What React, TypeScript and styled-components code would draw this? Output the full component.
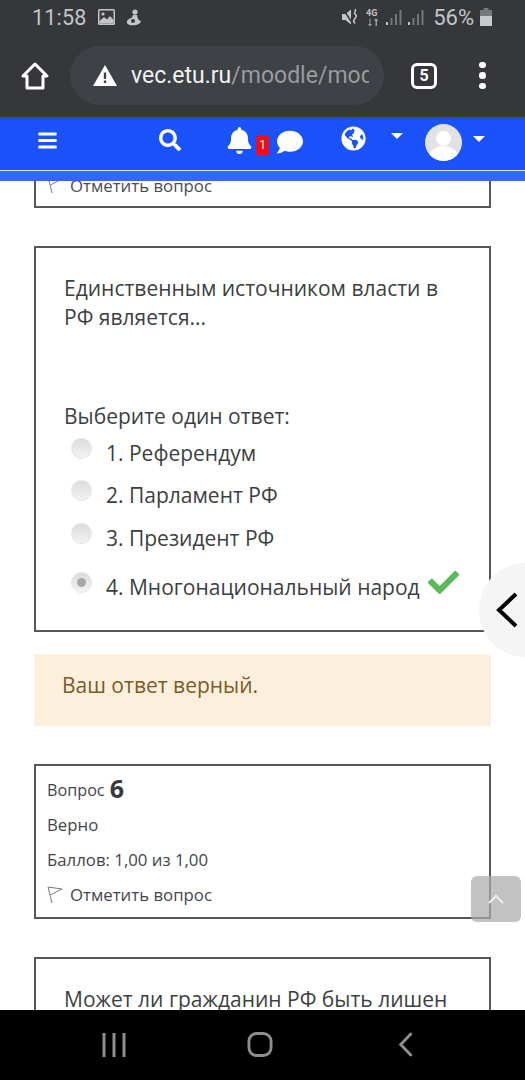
import React from "react";
import styled, { createGlobalStyle } from "styled-components";
import { FaBars, FaSearch, FaBell, FaComment, FaGlobeAmericas, FaCheck } from "react-icons/fa";

const Global = createGlobalStyle`
  html, body { margin: 0; padding: 0; background: #fff; }
  * { box-sizing: border-box; }
`;

const Phone = styled.div`
  position: relative;
  width: 525px;
  height: 1080px;
  display: flex;
  flex-direction: column;
  overflow: hidden;
  font-family: "Open Sans", "Liberation Sans", sans-serif;
  color: #373a3c;
`;

const StatusBar = styled.div`
  height: 36px;
  flex: none;
  background: #36373b;
  color: #c4c5c7;
  font-family: Roboto, "Liberation Sans", sans-serif;
  display: flex;
  align-items: center;
  justify-content: space-between;
  padding: 0 33px 2px 32px;
`;

const StatusGroup = styled.div`
  display: flex;
  align-items: center;
  gap: 11px;
`;

const StatusRight = styled(StatusGroup)`
  gap: 6px;
`;

const Clock = styled.span`
  font-size: 21.5px;
  letter-spacing: 0.2px;
`;

const Battery = styled.span`
  font-size: 22px;
  margin-left: 3px;
`;

const Toolbar = styled.div`
  height: 81px;
  flex: none;
  background: #36373b;
  display: flex;
  align-items: center;
  padding: 0 0 2px 20px;
`;

const UrlPill = styled.div`
  width: 314px;
  height: 59px;
  margin-left: 20px;
  border-radius: 30px;
  background: #3e4145;
  display: flex;
  align-items: center;
  padding-left: 23px;
  font-family: Roboto, "Liberation Sans", sans-serif;
  font-size: 23px;
`;

const UrlClip = styled.div`
  width: 238px;
  margin-left: 14px;
  overflow: hidden;
  white-space: nowrap;
  color: #f1f2f2;
`;

const UrlPath = styled.span`
  color: #999c9f;
`;

const TabCount = styled.div`
  width: 26px;
  height: 26px;
  margin-left: 27px;
  border: 3px solid #fff;
  border-radius: 6px;
  color: #fff;
  font: 700 16px Roboto, sans-serif;
  display: flex;
  align-items: center;
  justify-content: center;
`;

const Dots = styled.div`
  margin-left: 42px;
  display: flex;
  flex-direction: column;
  gap: 4px;
`;

const Dot = styled.span`
  width: 6.5px;
  height: 6.5px;
  border-radius: 50%;
  background: #fff;
`;

const NavBar = styled.div`
  height: 53px;
  flex: none;
  background: #1a53fb;
  color: #fff;
  display: flex;
  align-items: center;
  border-top: 3px solid #1f4ccd;
  position: relative;
`;

const NavStrip = styled.div`
  height: 11px;
  flex: none;
  background: #3468f2;
  border-top: 1px solid #dfe8ff;
`;

const NavSlot = styled.div<{ $w: number; $up?: number }>`
  width: ${(p) => p.$w}px;
  flex: none;
  display: flex;
  align-items: center;
  justify-content: flex-start;
  transform: translateY(${(p) => -(p.$up ?? 0)}px);
`;

const BadgeBox = styled.span`
  width: 13px;
  height: 20px;
  margin: 10px 0 0 3px;
  border-radius: 2px;
  background: #ee0d1a;
  color: #fff;
  font: 12px Roboto, sans-serif;
  display: flex;
  align-items: center;
  justify-content: center;
`;

const Caret = styled.span`
  width: 0;
  height: 0;
  border-left: 6px solid transparent;
  border-right: 6px solid transparent;
  border-top: 6px solid #fff;
`;

const Avatar = styled.span`
  width: 37px;
  height: 37px;
  border-radius: 50%;
  overflow: hidden;
  display: block;
`;

const Content = styled.div`
  flex: 1;
  min-height: 0;
  overflow: hidden;
  background: #fff;
  padding: 0 34px;
`;

const Card = styled.div`
  border: 2px solid #55585b;
  background: #fff;
`;

const ClippedCard = styled(Card)`
  height: 27px;
  border-top: 0;
  padding-left: 11px;
  overflow: hidden;
  margin-bottom: 38px;
`;

const ClippedInner = styled.div`
  margin-top: -8px;
`;

const FlagRow = styled.div`
  display: flex;
  align-items: center;
  gap: 7px;
  height: 24px;
  font-size: 16.8px;
  color: #4a4d50;
`;

const QuestionCard = styled(Card)`
  height: 386px;
  padding: 26px 20px 0 28px;
  margin-bottom: 22px;
`;

const QuestionText = styled.div`
  font-size: 21px;
  line-height: 28.5px;
  color: #3c3f41;
`;

const Prompt = styled(QuestionText)`
  margin-top: 71px;
`;

const Options = styled.div`
  margin-top: 5px;
  display: flex;
  flex-direction: column;
`;

const Option = styled.div<{ $h: number }>`
  height: ${(p) => p.$h}px;
  display: flex;
  align-items: flex-start;
  padding-left: 7px;
  font-size: 21px;
  line-height: 28px;
  color: #3c3f41;
`;

const Radio = styled.span<{ $on?: boolean }>`
  position: relative;
  width: 21px;
  height: 21px;
  margin: 2px 14px 0 0;
  border-radius: 50%;
  flex: none;
  background: linear-gradient(#dcdcdc, #f3f3f3);
  border: 1px solid #e4e4e4;
  &::after {
    content: "";
    position: absolute;
    left: 5px;
    top: 5px;
    width: 9px;
    height: 9px;
    border-radius: 50%;
    background: ${(p) => (p.$on ? "#a8a8a8" : "transparent")};
  }
`;

const OptionText = styled.span`
  margin-top: 3px;
  white-space: nowrap;
`;

const Tick = styled.span`
  display: flex;
  margin: -3px 0 0 8px;
  color: #5cb85c;
  font-size: 31px;
`;

const Alert = styled.div`
  height: 72px;
  margin: 0 0 38px;
  padding-left: 28px;
  background: #fcefdc;
  color: #7d5a29;
  font-size: 21px;
  display: flex;
  align-items: center;
  padding-bottom: 10px;
`;

const InfoCard = styled(Card)`
  height: 155px;
  padding: 6px 11px 0;
  margin-bottom: 38px;
  font-size: 16.8px;
  color: #43464a;
`;

const InfoLine = styled.div`
  height: 35px;
  display: flex;
  align-items: center;
`;

const QLabel = styled.span`
  font-size: 16.2px;
`;

const QNum = styled.b`
  font-size: 25px;
  line-height: 30px;
  margin: -4px 0 0 5px;
  color: #373a3c;
`;

const FlagLabel = styled.span`
  margin-left: 7px;
`;

const NextCard = styled(Card)`
  border-bottom: 0;
  height: 100px;
  padding: 26px 20px 0 28px;
`;

const BottomBar = styled.div`
  height: 70px;
  flex: none;
  background: #000;
  display: flex;
  align-items: center;
  padding-bottom: 1px;
`;

const BottomSlot = styled.div<{ $left: number }>`
  margin-left: ${(p) => p.$left}px;
  display: flex;
`;

const ToTop = styled.div`
  position: absolute;
  left: 471px;
  top: 876px;
  width: 50px;
  height: 46px;
  border-radius: 6px;
  background: rgba(170, 170, 170, 0.72);
  display: flex;
  align-items: center;
  justify-content: center;
`;

const EdgeHandle = styled.div`
  position: absolute;
  left: 479px;
  top: 563px;
  width: 92px;
  height: 94px;
  border-radius: 50%;
  background: #f5f5f5;
  display: flex;
  align-items: center;
  padding-left: 16px;
`;

const FlagIcon = ({ size = 16 }: { size?: number }) => (
  <svg width={size} height={size + 2} viewBox="0 0 16 18" fill="none" stroke="#77797b" strokeWidth="1">
    <path d="M1 1 L5 17 M1 1 L15 3 L3.4 9" />
  </svg>
);

export default function App() {
  return (
    <Phone>
      <Global />
      <StatusBar>
        <StatusGroup>
          <Clock>11:58</Clock>
          <svg width="17" height="16" viewBox="0 0 17 16">
            <rect x="0" y="0" width="17" height="16" rx="1.5" fill="#c4c5c7" />
            <rect x="1.5" y="1.5" width="14" height="13" fill="#3a3b3f" />
            <circle cx="5" cy="5" r="1.6" fill="#c4c5c7" />
            <path d="M1.5 14.5 L1.5 12 L6 8 L9 10.5 L12 7 L15.5 11 L15.5 14.5 Z" fill="#c4c5c7" />
          </svg>
          <svg width="16" height="17" viewBox="0 0 16 17" fill="#c4c5c7">
            <circle cx="9" cy="3" r="2.6" />
            <path d="M7 6 h4 l1 4 l3 2.5 l-1.5 2 c-3 2-8 2.5-11 1 C0.5 14.5 0 12 3 10 l3 -1.5 Z M5 12 a2 2 0 1 0 4 0 a2 2 0 1 0 -4 0" fillRule="evenodd" />
          </svg>
        </StatusGroup>
        <StatusRight>
          <svg width="18" height="18" viewBox="0 0 18 18" fill="#c4c5c7">
            <path d="M0 6 h3.5 L9 1.5 v15 L3.5 12 H0 Z" />
            <path d="M1 1 L11 16" stroke="#36373b" strokeWidth="1.5" />
            <path d="M13 1 c2 2-1.500 3 0 5 s2 2 0 4.500 s-1.500 3 0 5" fill="none" stroke="#c4c5c7" strokeWidth="1.6" />
          </svg>
          <svg width="14" height="19" viewBox="0 0 14 19" fill="#9c9da0">
            <text x="0" y="8" fontSize="9" fontWeight="700" fontFamily="Roboto, sans-serif" fill="#c4c5c7">4G</text>
            <path d="M3.500 10.500 h1 V16 H6 L4 18.500 L2 16 H3.500 Z M10 10 L12.500 13 H11 V18 H9.500 V13 H8 Z" />
          </svg>
          <svg width="16" height="17" viewBox="0 0 16 17" fill="#75777a">
            <rect x="0" y="13" width="2" height="3" fill="#c4c5c7" />
            <rect x="4.500" y="9" width="2" height="7" />
            <rect x="9" y="5" width="2" height="11" />
            <rect x="13.500" y="1" width="2" height="15" />
          </svg>
          <svg width="16" height="17" viewBox="0 0 16 17" fill="#75777a">
            <rect x="0" y="13" width="2" height="3" fill="#c4c5c7" />
            <rect x="4.500" y="9" width="2" height="7" />
            <rect x="9" y="5" width="2" height="11" />
            <rect x="13.500" y="1" width="2" height="15" />
          </svg>
          <Battery>56%</Battery>
          <svg width="12" height="18" viewBox="0 0 12 18">
            <rect x="3.500" y="0" width="5" height="2" fill="#76787b" />
            <rect x="0" y="2" width="12" height="6" fill="#76787b" />
            <rect x="0" y="8" width="12" height="10" fill="#c9cacb" />
          </svg>
        </StatusRight>
      </StatusBar>
      <Toolbar>
        <svg width="30" height="30" viewBox="0 0 30 30" fill="none" stroke="#fff" strokeWidth="3" strokeLinejoin="round">
          <path d="M15 3 L27 15 H23 V27 H7 V15 H3 Z" />
        </svg>
        <UrlPill>
          <svg width="24" height="21" viewBox="0 0 24 21">
            <path d="M12 0 L24 21 H0 Z" fill="#fff" />
            <rect x="10.800" y="7.500" width="2.400" height="6.500" fill="#3e4145" />
            <rect x="10.800" y="15.500" width="2.400" height="2.500" fill="#3e4145" />
          </svg>
          <UrlClip>
            vec.etu.ru<UrlPath>/moodle/mod/quiz</UrlPath>
          </UrlClip>
        </UrlPill>
        <TabCount>5</TabCount>
        <Dots>
          <Dot />
          <Dot />
          <Dot />
        </Dots>
      </Toolbar>
      <NavBar>
        <NavSlot $w={37} />
        <NavSlot $w={122} $up={5}>
          <FaBars size={21} />
        </NavSlot>
        <NavSlot $w={67} $up={5}>
          <FaSearch size={22} />
        </NavSlot>
        <NavSlot $w={51} $up={5}>
          <FaBell size={27} />
          <BadgeBox>1</BadgeBox>
        </NavSlot>
        <NavSlot $w={64} $up={3}>
          <FaComment size={26} />
        </NavSlot>
        <NavSlot $w={50} $up={7}>
          <FaGlobeAmericas size={25} />
        </NavSlot>
        <NavSlot $w={34} $up={9}>
          <Caret />
        </NavSlot>
        <NavSlot $w={48} $up={3}>
          <Avatar>
            <svg width="37" height="37" viewBox="0 0 37 37">
              <rect width="37" height="37" fill="#e2e2e2" />
              <circle cx="18.500" cy="14.500" r="7.500" fill="#fff" />
              <ellipse cx="18.500" cy="32" rx="14" ry="10" fill="#fff" />
            </svg>
          </Avatar>
        </NavSlot>
        <NavSlot $w={12} $up={6}>
          <Caret />
        </NavSlot>
      </NavBar>
      <NavStrip />
      <Content>
        <ClippedCard>
          <ClippedInner>
            <FlagRow>
              <FlagIcon />
              Отметить вопрос
            </FlagRow>
          </ClippedInner>
        </ClippedCard>
        <QuestionCard>
          <QuestionText>
            Единственным источником власти в
            <br />
            РФ является...
          </QuestionText>
          <Prompt>Выберите один ответ:</Prompt>
          <Options>
            <Option $h={42}>
              <Radio />
              <OptionText>1. Референдум</OptionText>
            </Option>
            <Option $h={43}>
              <Radio />
              <OptionText>2. Парламент РФ</OptionText>
            </Option>
            <Option $h={49}>
              <Radio />
              <OptionText>3. Президент РФ</OptionText>
            </Option>
            <Option $h={42}>
              <Radio $on />
              <OptionText>4. Многонациональный народ</OptionText>
              <Tick>
                <FaCheck />
              </Tick>
            </Option>
          </Options>
        </QuestionCard>
        <Alert>Ваш ответ верный.</Alert>
        <InfoCard>
          <InfoLine>
            <QLabel>Вопрос</QLabel>
            <QNum>6</QNum>
          </InfoLine>
          <InfoLine>Верно</InfoLine>
          <InfoLine>Баллов: 1,00 из 1,00</InfoLine>
          <InfoLine>
            <FlagIcon />
            <FlagLabel>Отметить вопрос</FlagLabel>
          </InfoLine>
        </InfoCard>
        <NextCard>
          <QuestionText>Может ли гражданин РФ быть лишен</QuestionText>
        </NextCard>
      </Content>
      <BottomBar>
        <BottomSlot $left={102}>
          <svg width="24" height="24" viewBox="0 0 24 24" stroke="#8e8e8e" strokeWidth="3">
            <path d="M2 0 V24 M12 0 V24 M22 0 V24" />
          </svg>
        </BottomSlot>
        <BottomSlot $left={121}>
          <svg width="26" height="25" viewBox="0 0 26 26" fill="none" stroke="#8e8e8e" strokeWidth="3">
            <rect x="1.500" y="1.500" width="23" height="23" rx="8" />
          </svg>
        </BottomSlot>
        <BottomSlot $left={125}>
          <svg width="15" height="25" viewBox="0 0 15 26" fill="none" stroke="#8e8e8e" strokeWidth="3" strokeLinecap="round">
            <path d="M13 2 L2.500 13 L13 24" />
          </svg>
        </BottomSlot>
      </BottomBar>
      <EdgeHandle>
        <svg width="24" height="36" viewBox="0 0 24 36" fill="none" stroke="#000" strokeWidth="4">
          <path d="M21 2 L4 18 L21 34" />
        </svg>
      </EdgeHandle>
      <ToTop>
        <svg width="16" height="10" viewBox="0 0 16 10" fill="none" stroke="#eeeeee" strokeWidth="2">
          <path d="M1 9 L8 2 L15 9" />
        </svg>
      </ToTop>
    </Phone>
  );
}
